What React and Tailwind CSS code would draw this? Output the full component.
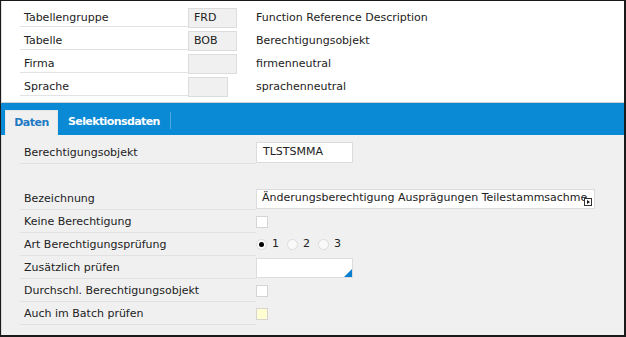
import React from 'react';

const font = { fontFamily: '"DejaVu Sans", Verdana, sans-serif' };

const HeaderRow = ({ label, code, text, boxW = 'w-[49px]' }) => (
  <div className="flex h-[23px]">
    <div className="ml-[18px] w-[168px] h-full border-b border-[#e3e3e3] flex items-center pl-[4px] pt-[6px] text-[11px] text-[#222]">
      {label}
    </div>
    <div className="w-[68px]">
      <div className={`${boxW} h-[20px] mt-[4px] bg-[#f0f0f0] border border-[#dcdcdc] flex items-center pl-[5px] text-[11px] text-[#222]`}>
        {code}
      </div>
    </div>
    <div className="flex items-center pt-[6px] text-[11px] text-[#222]">{text}</div>
  </div>
);

const Row = ({ label, children }) => (
  <div className="flex h-[23px]">
    <div className="ml-[18px] w-[236px] h-full border-b border-[#e2e2e2] flex items-center pl-[4px] pt-[3px] text-[11px] text-[#222]">
      {label}
    </div>
    <div className="flex items-center">{children}</div>
  </div>
);

const Check = ({ yellow }) => (
  <div className={`w-[12px] h-[12px] border border-[#d4d4d4] ${yellow ? 'bg-[#ffffd2]' : 'bg-white'}`}></div>
);

const Radio = ({ label, on }) => (
  <div className="flex items-center mr-[8px]">
    <div className="w-[11px] h-[11px] rounded-full border border-[#dcdcdc] bg-[#fafafa] flex items-center justify-center">
      {on && <div className="w-[5px] h-[5px] rounded-full bg-black"></div>}
    </div>
    <span className="ml-[5px] text-[11px] text-[#222]">{label}</span>
  </div>
);

export default function App() {
  return (
    <div style={font} className="w-[626px] h-[337px] border-l border-t border-r-2 border-b-2 border-[#1a1a1a] bg-[#f0f0f0] flex flex-col overflow-hidden">
      {/* Kopfbereich */}
      <div className="h-[101px] bg-white pt-[3px] border-l border-[#e0e0e0]">
        <HeaderRow label="Tabellengruppe" code="FRD" text="Function Reference Description" />
        <HeaderRow label="Tabelle" code="BOB" text="Berechtigungsobjekt" />
        <HeaderRow label="Firma" code="" text="firmenneutral" />
        <HeaderRow label="Sprache" code="" text="sprachenneutral" boxW="w-[40px]" />
      </div>
      <div className="h-[1px] bg-[#d0d0d0]"></div>

      {/* Reiter */}
      <div className="h-[32px] bg-[#0a89d4] flex items-end pl-[4px]">
        <div className="h-[25px] w-[53px] bg-[#f0f0f0] border-t border-l border-r border-[#e6e6e6] flex items-center justify-center text-[11px] font-bold tracking-[-0.5px] text-[#1c79c4]">
          Daten
        </div>
        <div className="h-[25px] flex items-center pl-[10px] pr-[10px] text-[11px] font-bold tracking-[-0.6px] text-white">Selektionsdaten</div>
        <div className="h-[17px] w-px bg-[#4fa9e0] mb-[6px]"></div>
      </div>

      {/* Inhalt */}
      <div className="flex-1 pt-[6px] border-l border-[#d8d8d8]">
        <Row label="Berechtigungsobjekt">
          <div className="w-[97px] h-[21px] bg-white border border-[#dcdcdc] flex items-center pl-[6px] text-[11px] text-[#222]">
            TLSTSMMA
          </div>
        </Row>
        <div className="h-[23px]"></div>
        <Row label="Bezeichnung">
          <div className="relative w-[339px] h-[20px] bg-white border border-[#dcdcdc] flex items-center pl-[5px] text-[11px] text-[#222] whitespace-nowrap">
            <span>Änderungsberechtigung Ausprägungen Teilestammsachme</span>
            <svg className="absolute right-[2px] bottom-[2px]" width="8" height="8" viewBox="0 0 8 8">
              <rect x="0.5" y="0.5" width="7" height="7" fill="white" stroke="#333" />
              <path d="M3 2 L6 4 L3 6 Z" fill="#111" />
            </svg>
          </div>
        </Row>
        <Row label="Keine Berechtigung">
          <Check />
        </Row>
        <Row label="Art Berechtigungsprüfung">
          <Radio label="1" on />
          <Radio label="2" />
          <Radio label="3" />
        </Row>
        <Row label="Zusätzlich prüfen">
          <div className="relative w-[97px] h-[20px] bg-white border border-[#dcdcdc]">
            <svg className="absolute right-0 bottom-0" width="8" height="8" viewBox="0 0 8 8">
              <path d="M8 0 L8 8 L0 8 Z" fill="#0a7fd0" />
            </svg>
          </div>
        </Row>
        <Row label="Durchschl. Berechtigungsobjekt">
          <Check />
        </Row>
        <Row label="Auch im Batch prüfen">
          <Check yellow />
        </Row>
      </div>
    </div>
  );
}
